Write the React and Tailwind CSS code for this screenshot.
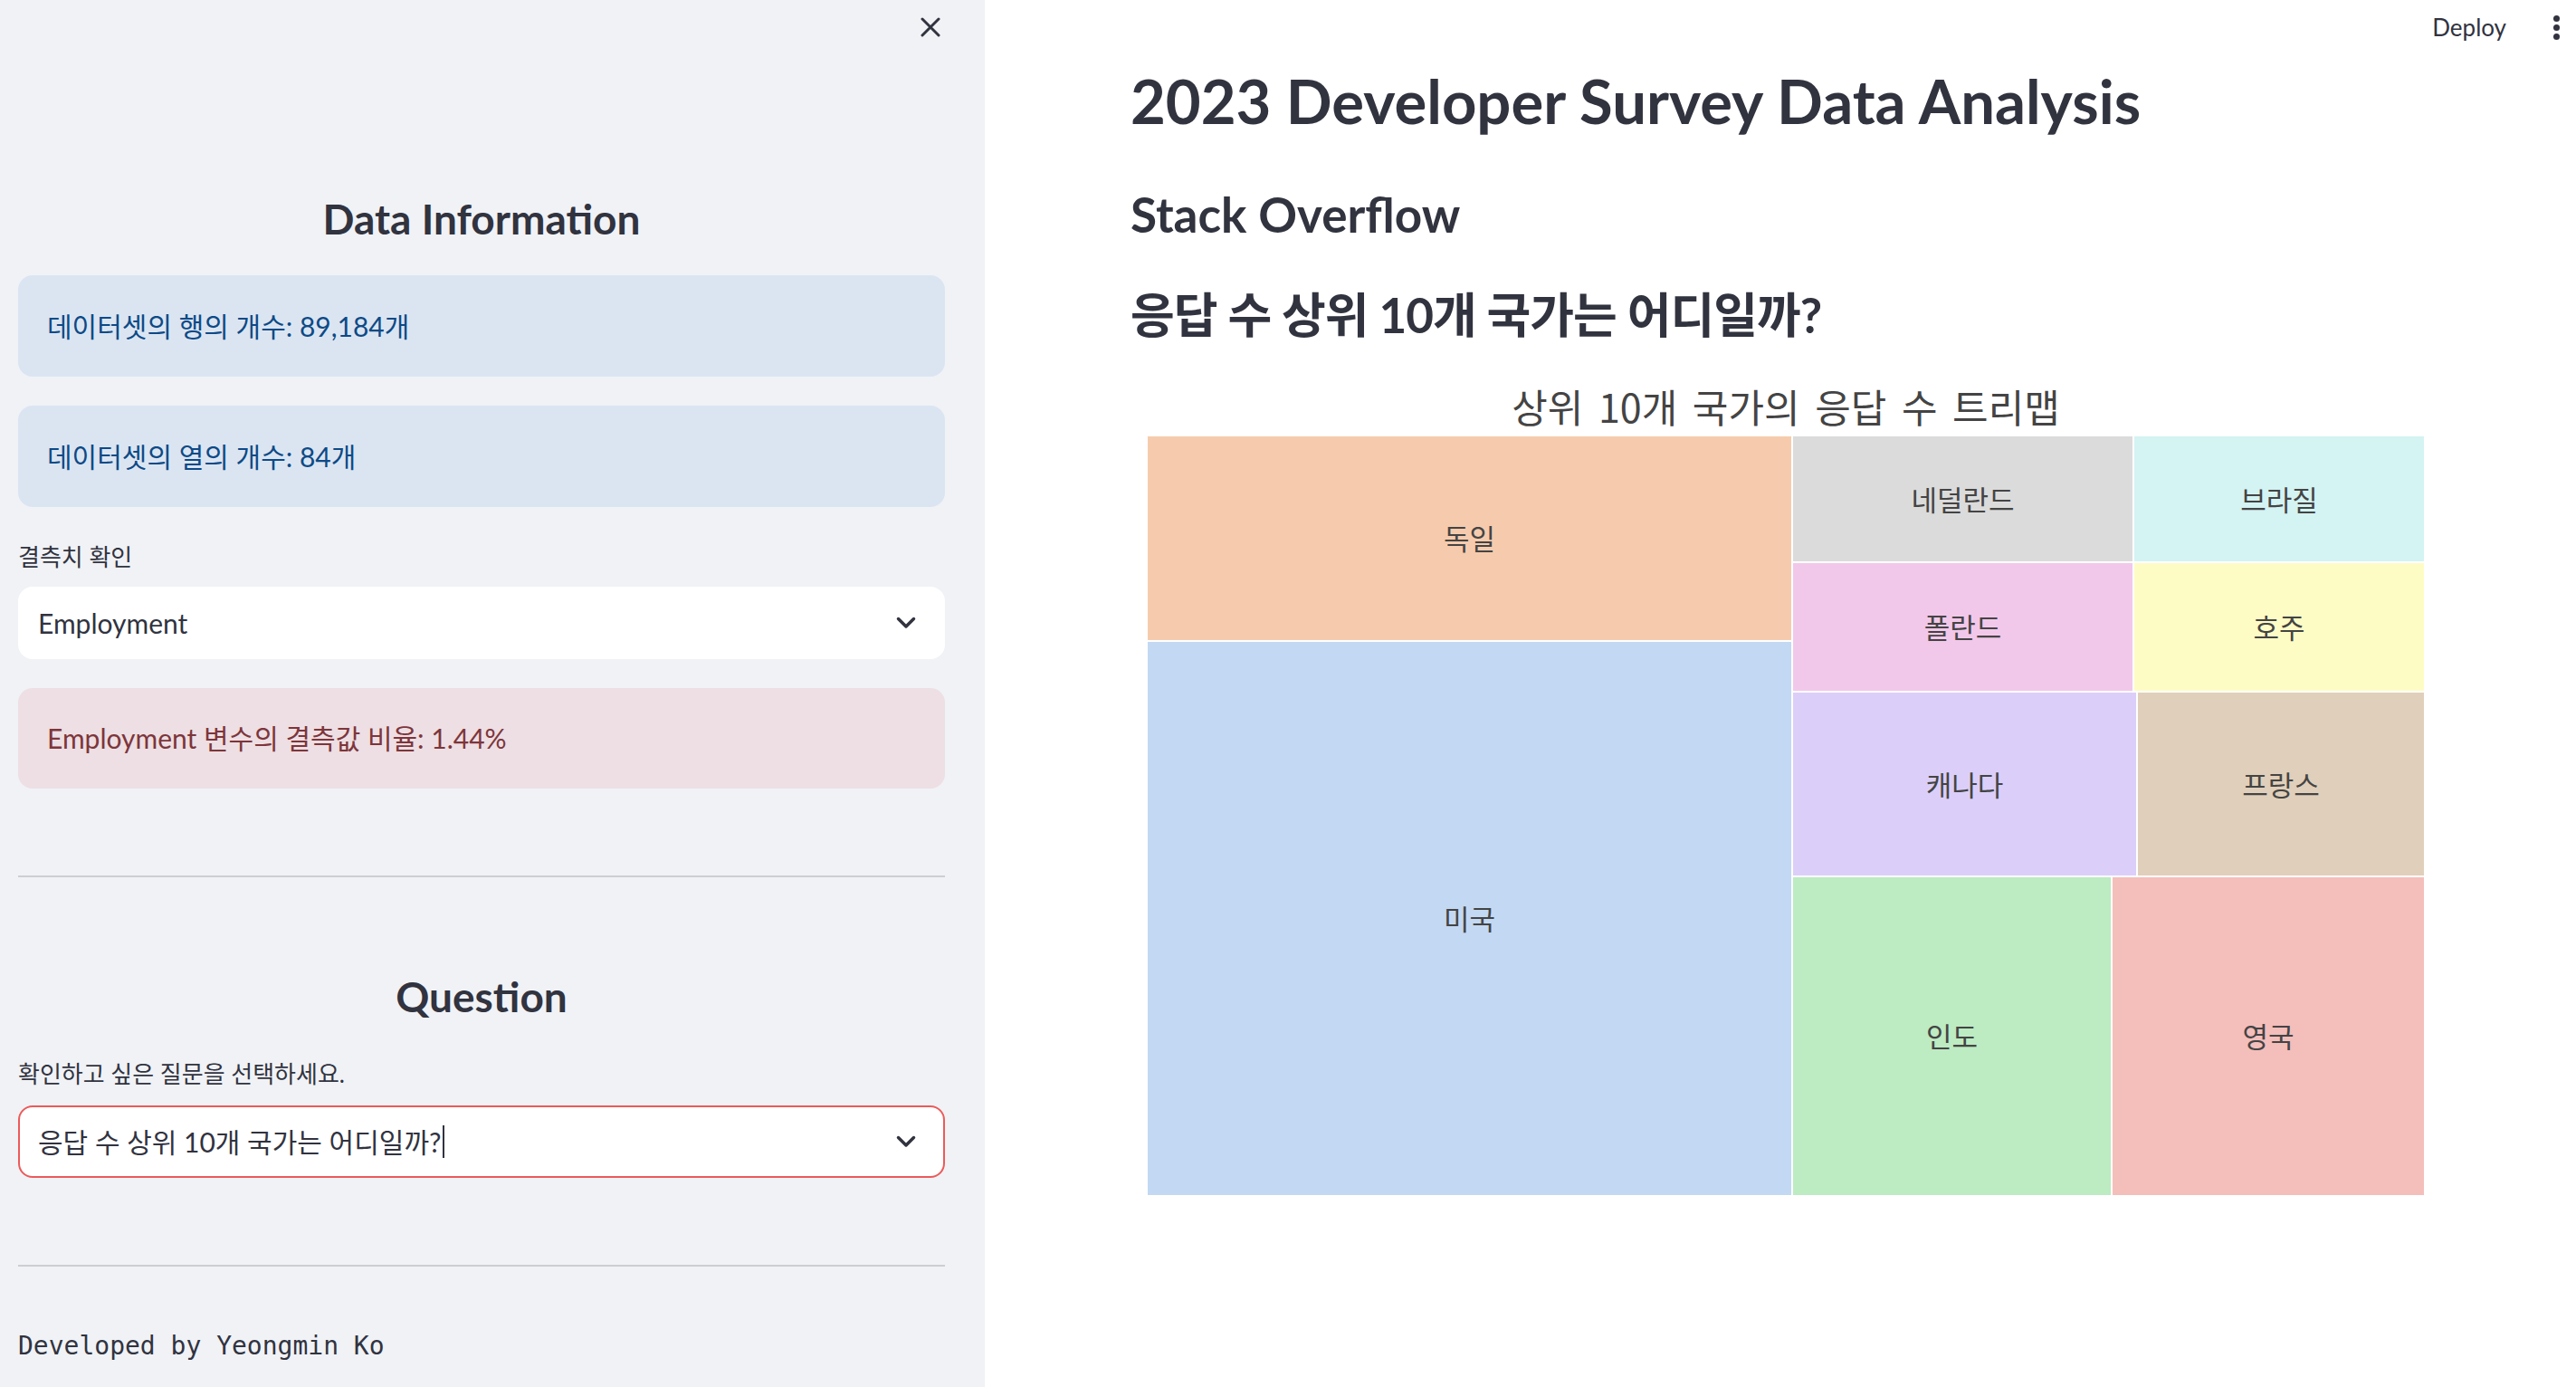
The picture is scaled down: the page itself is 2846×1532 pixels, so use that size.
import React from 'react';

const Chevron = () => (
  <svg width="22" height="14" viewBox="0 0 22 14" fill="none">
    <path d="M2.5 2.5L11 11L19.5 2.5" stroke="#31333f" strokeWidth="3.5" strokeLinecap="round" strokeLinejoin="round" />
  </svg>
);

const Select = ({ value, focused }) => (
  <div
    className={
      focused
        ? 'flex h-[80px] items-center justify-between rounded-[16px] border-2 border-[#ec5a5a] bg-white pl-[20px] pr-[30px]'
        : 'flex h-[80px] items-center justify-between rounded-[16px] border-2 border-white bg-white pl-[20px] pr-[30px]'
    }
  >
    <div className="flex items-center text-[30px] leading-[40px] text-[#31333f]">
      <span>{value}</span>
      {focused && <span className="ml-[2px] h-[36px] w-[2px] bg-[#31333f]" />}
    </div>
    <Chevron />
  </div>
);

const Cell = ({ label, className }) => (
  <div className={'flex items-center justify-center border border-white font-[\'Noto_Sans_CJK_KR\',sans-serif] text-[31px] text-[#444] ' + className}>
    {label}
  </div>
);

const Sidebar = () => (
  <aside className="flex w-[1088px] shrink-0 flex-col bg-[#f0f2f6] pl-[20px] pr-[44px] text-[#31333f]">
    <div className="flex h-[60px] items-center justify-end pr-[5px]">
      <svg width="22" height="22" viewBox="0 0 22 22" fill="none">
        <path d="M2 2L20 20M20 2L2 20" stroke="#31333f" strokeWidth="3" strokeLinecap="round" />
      </svg>
    </div>

    <h2 className="mt-[154px] text-center text-[46px] font-bold leading-[56px]">Data Information</h2>

    <div className="mt-[34px] flex h-[112px] items-center rounded-[16px] bg-[#dbe5f2] px-[32px] text-[30px] text-[#0d4a86]">
      <span>데이터셋의 행의 개수: 89,184개</span>
    </div>
    <div className="mt-[32px] flex h-[112px] items-center rounded-[16px] bg-[#dbe5f2] px-[32px] text-[30px] text-[#0d4a86]">
      <span>데이터셋의 열의 개수: 84개</span>
    </div>

    <div className="mt-[37px] text-[26px] leading-[36px]">결측치 확인</div>
    <div className="mt-[15px]">
      <Select value="Employment" />
    </div>

    <div className="mt-[32px] flex h-[111px] items-center rounded-[16px] bg-[#eddfe3] px-[32px] text-[30px] text-[#7d353b]">
      <span>Employment 변수의 결측값 비율: 1.44%</span>
    </div>

    <hr className="mt-[96px] border-0 border-t-2 border-[#cdced3]" />

    <h2 className="mt-[104px] text-center text-[46px] font-bold leading-[56px]">Question</h2>

    <div className="mt-[39px] text-[26px] leading-[36px]">확인하고 싶은 질문을 선택하세요.</div>
    <div className="mt-[17px]">
      <Select value="응답 수 상위 10개 국가는 어디일까?" focused />
    </div>

    <hr className="mt-[96px] border-0 border-t-2 border-[#cdced3]" />

    <p className="mt-[70px] font-['DejaVu_Sans_Mono',monospace] text-[28px] leading-[36px]">Developed by Yeongmin Ko</p>
  </aside>
);

const Treemap = () => (
  <div className="ml-[18px] w-[1412px]">
    <div className="text-center font-['Noto_Sans_CJK_KR',sans-serif] text-[43px] leading-[48px] [word-spacing:7px] text-[#444]">
      상위 10개 국가의 응답 수 트리맵
    </div>
    <div className="mt-[9px] flex h-[840px]">
      <div className="flex w-[713px] flex-col">
        <Cell label="독일" className="h-[227px] bg-[#f6cbad]" />
        <Cell label="미국" className="flex-1 bg-[#c3d8f3]" />
      </div>
      <div className="flex flex-1 flex-col">
        <div className="flex h-[140px]">
          <Cell label="네덜란드" className="w-[377px] bg-[#dbdbdb]" />
          <Cell label="브라질" className="flex-1 bg-[#d4f3f3]" />
        </div>
        <div className="flex h-[143px]">
          <Cell label="폴란드" className="w-[377px] bg-[#f2c8ea]" />
          <Cell label="호주" className="flex-1 bg-[#fefcc5]" />
        </div>
        <div className="flex h-[204px]">
          <Cell label="캐나다" className="w-[381px] bg-[#dbcff9]" />
          <Cell label="프랑스" className="flex-1 bg-[#e0cfba]" />
        </div>
        <div className="flex flex-1">
          <Cell label="인도" className="w-[353px] bg-[#bdebc2]" />
          <Cell label="영국" className="flex-1 bg-[#f4bebb]" />
        </div>
      </div>
    </div>
  </div>
);

export default function App() {
  return (
    <div className="flex h-[1532px] w-full overflow-hidden bg-white font-['Lato','Noto_Sans_CJK_KR',sans-serif]">
      <Sidebar />
      <main className="flex flex-1 flex-col text-[#31333f]">
        <header className="flex h-[61px] items-center justify-end pr-[18px]">
          <span className="mr-[52px] text-[26px]">Deploy</span>
          <div className="flex flex-col gap-[3px]">
            <span className="h-[7px] w-[7px] rounded-full bg-[#31333f]" />
            <span className="h-[7px] w-[7px] rounded-full bg-[#31333f]" />
            <span className="h-[7px] w-[7px] rounded-full bg-[#31333f]" />
          </div>
        </header>
        <div className="flex flex-col pl-[161px]">
          <h1 className="mt-[8px] text-[67px] font-bold leading-[84px]">2023 Developer Survey Data Analysis</h1>
          <h2 className="mt-[52px] text-[53px] font-bold leading-[64px]">Stack Overflow</h2>
          <h3 className="mt-[47px] text-[53px] font-bold leading-[64px] tracking-[-1px]">응답 수 상위 10개 국가는 어디일까?</h3>
          <div className="mt-[44px]">
            <Treemap />
          </div>
        </div>
      </main>
    </div>
  );
}
